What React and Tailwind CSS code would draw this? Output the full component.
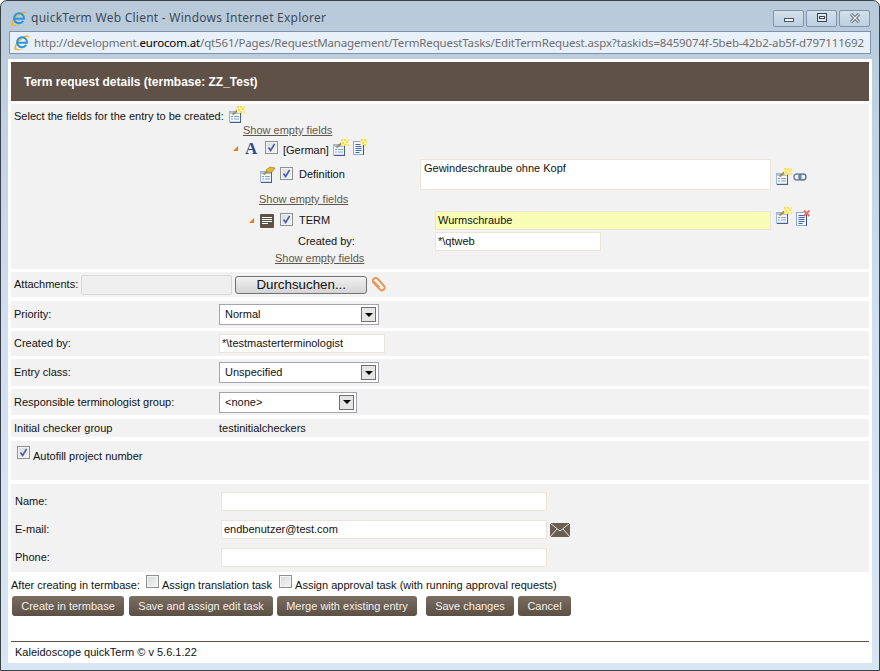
import React from 'react'

const Check = ({ on = true }) => (
  <span className="inline-flex items-center justify-center w-[13px] h-[13px] shrink-0 border border-[#8e8f8f] bg-gradient-to-br from-[#d8d9da] to-[#f6f6f6] shadow-[inset_0_0_0_1px_#f4f4f4]">
    {on && (
      <svg width="9" height="9" viewBox="0 0 9 9">
        <path d="M1.5 4.5 L3.6 7.5 L7.6 1" fill="none" stroke="#4a5ca8" strokeWidth="1.6" />
      </svg>
    )}
  </span>
)

const FormIcon = ({ spark = true }) => (
  <svg width="16" height="17" viewBox="0 0 16 17" className="shrink-0">
    <rect x="0.5" y="5.5" width="11" height="10.5" fill="#f6f9fd" stroke="#9db6da" />
    <rect x="1" y="6" width="10" height="2" fill="#a9c6ea" />
    <path d="M2 10.5h2M5 10.5h5M2 13h2M5 13h5" stroke="#7f9fd0" />
    <path d="M11.5 6v11M1 16.5h11" stroke="#4a5f86" />
    <path d="M3.5 8.5 L10 3" stroke="#a88f4a" strokeWidth="2" />
    {spark ? (
      <>
        <rect x="8" y="0" width="7.5" height="7" fill="#fff3a0" />
        <path d="M8 1h2M12 0v2M15 1h1M9 4h2M13 3h2M8 6h1M11 6h2M15 6h1" stroke="#e8c420" />
      </>
    ) : (
      <path d="M6 4 L10 1 L15 2 L12 6 L8 7 Z" fill="#e0b92c" stroke="#8a7328" strokeWidth="0.6" />
    )}
  </svg>
)

const DocIcon = ({ cross = false, spark = false }) => (
  <svg width="14" height="16" viewBox="0 0 14 16" className="shrink-0">
    <rect x="0.5" y="2.5" width="10" height="13" fill="#f4f7fc" stroke="#8ba8cf" />
    <path d="M2.5 5.5h6M2.5 7.5h6M2.5 9.5h6M2.5 11.5h6M2.5 13.5h4" stroke="#3f62b4" />
    <path d="M10.5 3v13" stroke="#33507e" />
    {spark && (
      <>
        <rect x="7.5" y="0" width="6.5" height="6" fill="#fff3a0" />
        <path d="M8 1h2M12 0v2M9 4h2M13 3h1M11 6h2" stroke="#e8c420" />
      </>
    )}
    {cross && <path d="M8 0.5 L13.5 6 M13.5 0.5 L8 6" stroke="#ee6a60" strokeWidth="1.9" />}
  </svg>
)

const LinkIcon = () => (
  <svg width="14" height="8" viewBox="0 0 14 8" className="shrink-0">
    <rect x="1" y="1" width="7" height="6" rx="3" fill="none" stroke="#6a7f9f" strokeWidth="1.4" />
    <rect x="6" y="1" width="7" height="6" rx="3" fill="none" stroke="#5a7199" strokeWidth="1.4" />
  </svg>
)

const Tri = () => (
  <svg width="5" height="5" viewBox="0 0 5 5" className="shrink-0">
    <path d="M5 0V5H0Z" fill="#f27a12" />
  </svg>
)

const EmptyLink = ({ className = '' }) => (
  <div className={`h-[14px] leading-[14px] ${className}`}>
    <span className="text-[#62564a] underline underline-offset-1">Show empty fields</span>
  </div>
)

const Select = ({ value, width }) => (
  <div className={`flex items-center justify-between h-[21px] ${width} bg-white border border-[#a4a4ac] pl-[5px] pr-[2px]`}>
    <span>{value}</span>
    <span className="flex items-center justify-center w-[15px] h-[15px] bg-[#e6e6e6] border border-[#707070]">
      <span className="w-0 h-0 border-x-[4px] border-x-transparent border-t-[4px] border-t-black" />
    </span>
  </div>
)

const Field = ({ value = '', className = '' }) => (
  <div className={`h-[19px] leading-[17px] bg-white border border-[#ece4da] pl-[2px] overflow-hidden ${className}`}>{value}</div>
)

const Row = ({ label, children, className = '' }) => (
  <div className={`flex items-center bg-[#f2f2f2] pl-[3px] ${className}`}>
    <div className="w-[205px] shrink-0">{label}</div>
    {children}
  </div>
)

const Btn = ({ children, className = '' }) => (
  <button className={`h-[20px] rounded-[3px] bg-gradient-to-b from-[#7a6d61] to-[#5c5045] text-[#f4f0ec] text-[11px] ${className}`}>{children}</button>
)

const Caption = ({ kind }) => (
  <svg width="12" height="10" viewBox="0 0 12 10">
    {kind === 'min' && <rect x="1.5" y="5.5" width="9" height="3" fill="#f3f3f3" stroke="#4c5662" />}
    {kind === 'max' && (
      <>
        <rect x="1.5" y="0.5" width="9" height="8" fill="#dfe8f0" stroke="#3c4652" />
        <rect x="3.5" y="3.5" width="5" height="2" fill="#fff" stroke="#3c4652" />
      </>
    )}
    {kind === 'close' && (
      <>
        <path d="M2 1 L10 9 M10 1 L2 9" stroke="#4c5662" strokeWidth="3" />
        <path d="M2 1 L10 9 M10 1 L2 9" stroke="#eef2f6" strokeWidth="1.2" />
      </>
    )}
  </svg>
)

const IeLogo = () => (
  <svg width="17" height="17" viewBox="0 0 17 17" className="shrink-0">
    <path d="M1.5 15.5 C0 12.5 5 4 13 1.5 C15.5 1 17 2 16 4.5 C15.5 3 14 2.8 12 3.5 C7 5.5 3.5 10 3 14 C4.5 15.5 7 15.5 10 14.5 C7 16.5 3 16.8 1.5 15.5Z" fill="#f2b42a" />
    <path d="M13.2 11 A5 5 0 1 1 14 8.8 L5 8.8" fill="none" stroke="#2b95e0" strokeWidth="2" />
  </svg>
)

export default function App() {
  return (
    <div className="w-[880px] h-[671px] overflow-hidden flex flex-col rounded-t-[7px] border border-[#3c4148] bg-gradient-to-b from-[#b8cada] via-[#d0e0f0] to-[#d8e5f2] text-[11px] text-[#111] font-['Liberation_Sans',Arial,sans-serif]">
      <div className="h-[30px] shrink-0 flex items-center pl-[9px] pr-[9px] pt-[4px]">
        <IeLogo />
        <span className="ml-[4px] text-[12px] tracking-[0.25px] text-[#3c4a58] font-['Noto_Sans',sans-serif]">quickTerm Web Client - Windows Internet Explorer</span>
        <div className="ml-auto flex gap-[2px]">
          <span className="flex items-center justify-center w-[31px] h-[17px] rounded-[2px] border border-[#8095ac] bg-gradient-to-b from-[#d3e0ec] to-[#bdcfe0]"><Caption kind="min" /></span>
          <span className="flex items-center justify-center w-[31px] h-[17px] rounded-[2px] border border-[#8095ac] bg-gradient-to-b from-[#d3e0ec] to-[#bdcfe0]"><Caption kind="max" /></span>
          <span className="flex items-center justify-center w-[31px] h-[17px] rounded-[2px] border border-[#8095ac] bg-gradient-to-b from-[#d3e0ec] to-[#bdcfe0]"><Caption kind="close" /></span>
        </div>
      </div>

      <div className="mx-[8px] h-[23px] shrink-0 flex items-center pl-[3px] border border-[#7f93a8] bg-[#e8f0f9] overflow-hidden whitespace-nowrap text-[11.5px] tracking-[-0.15px] text-[#6e6e6e] font-['Noto_Sans',sans-serif]">
        <IeLogo />
        <span className="ml-[4px]">http://development.<span className="text-black">eurocom.at</span>/qt561/Pages/RequestManagement/TermRequestTasks/EditTermRequest.aspx?taskids=8459074f-5beb-42b2-ab5f-d797111692</span>
      </div>

      <div className="mx-[7px] mt-[5px] h-[604px] shrink-0 flex flex-col bg-white p-[3px] pb-0">
        <div className="h-[39px] shrink-0 flex items-center pl-[13px] bg-[#5f5145] text-white text-[12px] font-bold">Term request details (termbase: ZZ_Test)</div>

        <div className="mt-[3px] h-[165px] shrink-0 bg-[#f2f2f2] pl-[3px] pt-[6px]">
          <div className="h-[13px] flex items-center gap-[5px]">
            <span>Select the fields for the entry to be created:</span>
            <span className="mt-[-5px]"><FormIcon /></span>
          </div>
          <EmptyLink className="ml-[229px]" />
          <div className="h-[20px] mt-[1px] ml-[219px] flex items-center">
            <Tri />
            <span className="ml-[7px] w-[16px] text-[17px] leading-none font-bold text-[#2c4a8c] font-['Liberation_Serif',serif]">A</span>
            <span className="ml-[4px]"><Check /></span>
            <span className="ml-[5px] mt-[5px]">[German]</span>
            <span className="ml-[4px] mt-[-2px]"><FormIcon /></span>
            <span className="ml-[4px] mt-[-2px]"><DocIcon spark /></span>
          </div>
          <div className="h-[33px] flex items-center">
            <div className="w-[406px] shrink-0 flex items-center pl-[246px]">
              <FormIcon spark={false} />
              <span className="ml-[4px]"><Check /></span>
              <span className="ml-[6px]">Definition</span>
            </div>
            <div className="w-[351px] h-[31px] bg-white border border-[#ece4da] pl-[3px] pt-[1px] leading-[14px]">Gewindeschraube ohne Kopf</div>
            <span className="ml-[5px] mt-[4px]"><FormIcon /></span>
            <span className="ml-[1px] mt-[4px]"><LinkIcon /></span>
          </div>
          <EmptyLink className="ml-[245px] mt-[1px]" />
          <div className="h-[21px] mt-[4px] flex items-center">
            <div className="w-[421px] shrink-0 pl-[235px] flex items-center">
              <Tri />
              <span className="ml-[6px] w-[14px] h-[14px] flex flex-col justify-center gap-[1px] px-[2px] bg-[#5f5145] rounded-[1px]">
                <span className="h-px bg-white" /><span className="h-px bg-white" /><span className="h-px bg-white" /><span className="h-px bg-white w-[6px]" />
              </span>
              <span className="ml-[6px]"><Check /></span>
              <span className="ml-[6px]">TERM</span>
            </div>
            <div className="w-[336px] h-[19px] leading-[17px] bg-[#f7fdb4] border border-[#ece4da] pl-[2px]">Wurmschraube</div>
            <span className="ml-[5px] mt-[-10px]"><FormIcon /></span>
            <span className="ml-[4px] mt-[-5px]"><DocIcon cross /></span>
          </div>
          <div className="h-[19px] mt-[1px] flex items-center">
            <div className="w-[421px] shrink-0 pl-[284px]">Created by:</div>
            <Field value="*\qtweb" className="w-[166px]" />
          </div>
          <EmptyLink className="ml-[261px]" />
        </div>

        <div className="mt-[3px] h-[25px] shrink-0 flex items-center bg-[#f2f2f2] pl-[3px]">
          <span>Attachments:</span>
          <span className="ml-[3px] w-[151px] h-[20px] rounded-[2px] border border-[#d8d8d8] bg-[#efefef]" />
          <span className="ml-[3px] w-[132px] h-[18px] flex items-center justify-center rounded-[3px] border border-[#707070] bg-gradient-to-b from-[#f2f2f2] to-[#d4d4d4] text-[13.33px]">Durchsuchen...</span>
          <svg width="17" height="17" viewBox="0 0 17 17" className="ml-[3px]">
            <path d="M2.5 5.5 L10 13.5 C12 15.5 15.5 13.5 14.5 10.5 L8 3 C6.5 1 2.5 2 3 5 L9.5 11.5" fill="none" stroke="#e6995a" strokeWidth="2" />
          </svg>
        </div>

        <Row label="Priority:" className="mt-[4px] h-[27px]"><Select value="Normal" width="w-[160px]" /></Row>
        <Row label="Created by:" className="mt-[3px] h-[25px]"><Field value="*\testmasterterminologist" className="w-[166px]" /></Row>
        <Row label="Entry class:" className="mt-[3px] h-[27px]"><Select value="Unspecified" width="w-[160px]" /></Row>
        <Row label="Responsible terminologist group:" className="mt-[3px] h-[26px]"><Select value="<none>" width="w-[138px]" /></Row>
        <Row label="Initial checker group" className="mt-[4px] h-[18px]"><span>testinitialcheckers</span></Row>

        <div className="mt-[4px] h-[39px] shrink-0 bg-[#f2f2f2] pl-[6px] pt-[5px] flex items-start">
          <Check />
          <span className="ml-[3px] mt-[2px]">Autofill project number</span>
        </div>

        <div className="mt-[4px] h-[88px] shrink-0 flex flex-col gap-[9px] bg-[#f2f2f2] pl-[4px] pt-[8px]">
          {[['Name:', ''], ['E-mail:', 'endbenutzer@test.com'], ['Phone:', '']].map(([label, value]) => (
            <div key={label} className="flex items-center h-[19px]">
              <span className="w-[206px] shrink-0">{label}</span>
              <Field value={value} className="w-[326px]" />
              {label === 'E-mail:' && (
                <svg width="20" height="14" viewBox="0 0 20 14" className="ml-[3px]">
                  <rect width="20" height="14" rx="1" fill="#6b5f53" />
                  <path d="M0 0 L10 8 L20 0 M0 14 L7 6 M20 14 L13 6" stroke="#e8e4de" fill="none" />
                </svg>
              )}
            </div>
          ))}
        </div>

        <div className="mt-[6px] h-[14px] shrink-0 flex items-center">
          <span>After creating in termbase:</span>
          <span className="ml-[6px] mt-[-3px]"><Check on={false} /></span>
          <span className="ml-[3px]">Assign translation task</span>
          <span className="ml-[7px] mt-[-3px]"><Check on={false} /></span>
          <span className="ml-[3px]">Assign approval task (with running approval requests)</span>
        </div>

        <div className="mt-[4px] ml-[1px] flex shrink-0">
          <Btn className="w-[112px]">Create in termbase</Btn>
          <Btn className="ml-[5px] w-[144px]">Save and assign edit task</Btn>
          <Btn className="ml-[4px] w-[140px]">Merge with existing entry</Btn>
          <Btn className="ml-[9px] w-[88px]">Save changes</Btn>
          <Btn className="ml-[4px] w-[53px]">Cancel</Btn>
        </div>

        <div className="mt-[25px] shrink-0 border-t border-[#5f5145] pt-[2px] pl-[4px]">Kaleidoscope quickTerm © v 5.6.1.22</div>
      </div>
    </div>
  )
}
